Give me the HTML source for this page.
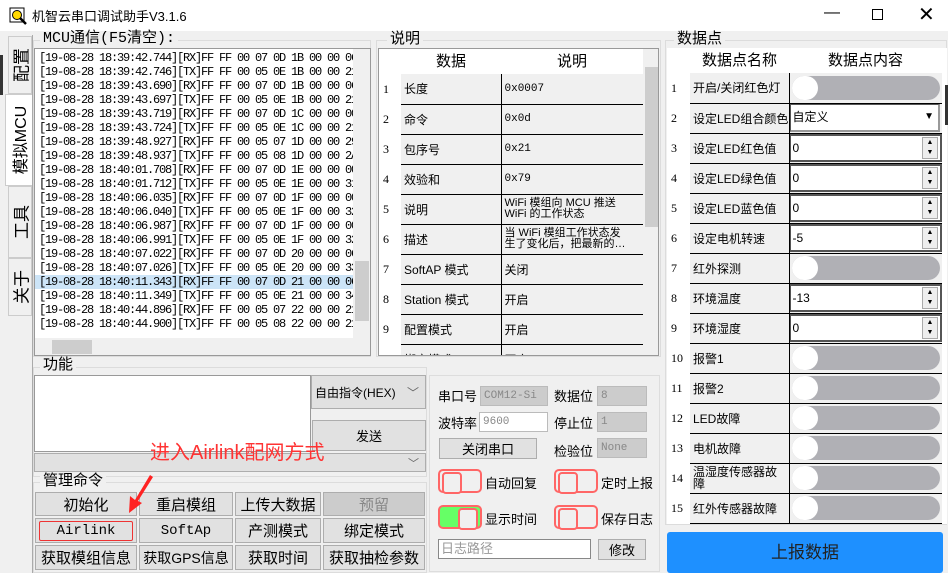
<!DOCTYPE html>
<html><head><meta charset="utf-8"><style>
*{box-sizing:border-box;margin:0;padding:0}
body{width:948px;height:573px;background:#f0f0f0;font-family:"Liberation Sans","Noto Sans CJK SC",sans-serif;font-size:13px;color:#000;position:relative;overflow:hidden}
.a{position:absolute}
.grp{position:absolute;border:1px solid #dcdcdc}
.gt{position:absolute;background:#f0f0f0;padding:0 3px;font-size:15px;line-height:16px}
.log{font-family:"Liberation Mono","Noto Sans CJK SC",monospace;font-size:12px;letter-spacing:-1.2px;line-height:14px;white-space:nowrap}
.btn{position:absolute;background:#e1e1e1;border:1px solid #adadad;text-align:center;font-size:15px;display:flex;align-items:center;justify-content:center;white-space:nowrap;overflow:hidden}
table{border-collapse:collapse;position:absolute;table-layout:fixed}
td{height:30px;border-bottom:1px solid #000;font-size:12px;padding-left:3px;overflow:hidden;white-space:nowrap}
td.n{border:none;background:#fff;padding-left:4px;font-family:"Liberation Serif",serif}
td.k{background:#f0f0f0;border-right:1px solid #000}
td.v{background:#f0f0f0}
.sw{height:24px;margin:0 2px;background:#b0b0b5;border-radius:12px;position:relative}
.sw:before{content:"";position:absolute;left:0;top:0;width:26px;height:24px;border-radius:12px;background:#fff}
.sp{height:28px;background:#fff;border:2px solid #555;border-left:1px solid #555;position:relative;padding-left:2px;line-height:24px;font-size:12px}
.sp i{position:absolute;right:2px;top:1px;width:16px;height:22px;border:1px solid #aaa;background:#eee;font-style:normal;font-size:7px;line-height:10px;text-align:center}
.tg{position:absolute;width:44px;height:24px;border:2px solid #f66;border-radius:5px;background:#f0f0f0}
.tg:before{content:"";position:absolute;left:2px;top:1px;width:16px;height:18px;border:2px solid #f66;border-radius:4px;background:#f0f0f0}
.tg.on:before{left:auto;right:2px}
.lb{position:absolute;font-size:13px}
.cb{position:absolute;background:#ccc;border:1px solid #bbb;font-size:11px;color:#888;padding-left:3px;line-height:18px;font-family:"Liberation Mono",monospace}
.tab{position:absolute;border:1px solid #ccc;overflow:hidden}
.tab span{position:absolute;left:50%;top:50%;transform:translate(-50%,-50%) rotate(-90deg);white-space:nowrap;font-size:17px}
</style></head><body>
<div class="a" style="left:0;top:0;width:948px;height:31px;background:#fff"></div>
<svg class="a" style="left:9px;top:7px" width="18" height="18"><rect x="1" y="1" width="14" height="14" fill="#fff" stroke="#000"/><circle cx="8" cy="8" r="4.5" fill="#ffd800" stroke="#000"/><line x1="11" y1="11" x2="17" y2="17" stroke="#000" stroke-width="2.5"/></svg>
<div class="a" style="left:32px;top:6px;font-size:13px">机智云串口调试助手V3.1.6</div>
<div class="a" style="left:824px;top:4px;font-size:16px">—</div>
<div class="a" style="left:872px;top:9px;width:11px;height:11px;border:1px solid #000"></div>
<div class="a" style="left:918px;top:2px;font-size:20px;font-weight:300">✕</div>
<div class="a" style="left:0;top:55px;width:3px;height:40px;background:#333"></div>
<div class="tab" style="left:8px;top:36px;width:24px;height:58px"><span>配置</span></div>
<div class="tab" style="left:5px;top:94px;width:28px;height:92px;background:#fff"><span style="font-size:16px">模拟MCU</span></div>
<div class="tab" style="left:8px;top:186px;width:24px;height:72px"><span>工具</span></div>
<div class="tab" style="left:8px;top:258px;width:24px;height:58px"><span>关于</span></div>
<div class="a" style="left:32px;top:35px;width:1px;height:538px;background:#aaa"></div>
<div class="grp" style="left:33px;top:40px;width:338px;height:317px"></div>
<div class="gt" style="left:40px;top:31px;font-family:'Liberation Mono','Noto Sans CJK SC',monospace">MCU通信(F5清空):</div>
<div class="a" style="left:34px;top:48px;width:337px;height:308px;background:#fff;border:1px solid #999;overflow:hidden">
<div class="log a" style="left:4px;top:2px">
[19-08-28 18:39:42.744][RX]FF FF 00 07 0D 1B 00 00 06<br>[19-08-28 18:39:42.746][TX]FF FF 00 05 0E 1B 00 00 21<br>[19-08-28 18:39:43.690][RX]FF FF 00 07 0D 1B 00 00 06<br>[19-08-28 18:39:43.697][TX]FF FF 00 05 0E 1B 00 00 21<br>[19-08-28 18:39:43.719][RX]FF FF 00 07 0D 1C 00 00 00<br>[19-08-28 18:39:43.724][TX]FF FF 00 05 0E 1C 00 00 21<br>[19-08-28 18:39:48.927][RX]FF FF 00 05 07 1D 00 00 29<br>[19-08-28 18:39:48.937][TX]FF FF 00 05 08 1D 00 00 2A<br>[19-08-28 18:40:01.708][RX]FF FF 00 07 0D 1E 00 00 00<br>[19-08-28 18:40:01.712][TX]FF FF 00 05 0E 1E 00 00 31<br>[19-08-28 18:40:06.035][RX]FF FF 00 07 0D 1F 00 00 00<br>[19-08-28 18:40:06.040][TX]FF FF 00 05 0E 1F 00 00 32<br>[19-08-28 18:40:06.987][RX]FF FF 00 07 0D 1F 00 00 00<br>[19-08-28 18:40:06.991][TX]FF FF 00 05 0E 1F 00 00 32<br>[19-08-28 18:40:07.022][RX]FF FF 00 07 0D 20 00 00 06<br>[19-08-28 18:40:07.026][TX]FF FF 00 05 0E 20 00 00 33<br><span style="background:#cce4f7;display:inline-block;width:330px;margin-left:-4px;padding-left:4px">[19-08-28 18:40:11.343][RX]FF FF 00 07 0D 21 00 00 06</span><br>[19-08-28 18:40:11.349][TX]FF FF 00 05 0E 21 00 00 34<br>[19-08-28 18:40:44.896][RX]FF FF 00 05 07 22 00 00 21<br>[19-08-28 18:40:44.900][TX]FF FF 00 05 08 22 00 00 21
</div>
<div class="a" style="left:318px;top:0;width:18px;height:290px;background:#f0f0f0"></div>
<div class="a" style="left:320px;top:212px;width:14px;height:60px;background:#cdcdcd"></div>
<div class="a" style="left:0;top:289px;width:336px;height:18px;background:#f0f0f0"></div>
<div class="a" style="left:17px;top:291px;width:40px;height:14px;background:#cdcdcd"></div>
</div>
<div class="grp" style="left:376px;top:40px;width:285px;height:317px"></div>
<div class="gt" style="left:387px;top:31px">说明</div>
<div class="a" style="left:378px;top:48px;width:281px;height:308px;background:#fff;border:1px solid #999;overflow:hidden">
<div class="a" style="left:22px;top:0;width:242px;height:25px;text-align:center;font-size:15px;line-height:25px"><span style="position:absolute;left:0;width:100px">数据</span><span style="position:absolute;left:100px;width:142px">说明</span></div>
<table style="left:0;top:25px;width:264px">
<colgroup><col style="width:22px"><col style="width:100px"><col style="width:142px"></colgroup>
<tr><td class="n">1</td><td class="k">长度</td><td class="v" style="font-family:'Liberation Mono',monospace;font-size:11px">0x0007</td></tr>
<tr><td class="n">2</td><td class="k">命令</td><td class="v" style="font-family:'Liberation Mono',monospace;font-size:11px">0x0d</td></tr>
<tr><td class="n">3</td><td class="k">包序号</td><td class="v" style="font-family:'Liberation Mono',monospace;font-size:11px">0x21</td></tr>
<tr><td class="n">4</td><td class="k">效验和</td><td class="v" style="font-family:'Liberation Mono',monospace;font-size:11px">0x79</td></tr>
<tr><td class="n">5</td><td class="k">说明</td><td class="v" style="font-size:11px;line-height:11px">WiFi 模组向 MCU 推送<br>WiFi 的工作状态</td></tr>
<tr><td class="n">6</td><td class="k">描述</td><td class="v" style="font-size:11px;line-height:11px">当 WiFi 模组工作状态发<br>生了变化后，把最新的…</td></tr>
<tr><td class="n">7</td><td class="k">SoftAP 模式</td><td class="v">关闭</td></tr>
<tr><td class="n">8</td><td class="k">Station 模式</td><td class="v">开启</td></tr>
<tr><td class="n">9</td><td class="k">配置模式</td><td class="v">开启</td></tr>
<tr><td class="n">10</td><td class="k">绑定模式</td><td class="v">开启</td></tr>
</table>
<div class="a" style="left:264px;top:0;width:16px;height:308px;background:#f0f0f0"></div>
<div class="a" style="left:266px;top:18px;width:13px;height:160px;background:#cdcdcd"></div>
</div>
<div class="grp" style="left:665px;top:40px;width:282px;height:485px"></div>
<div class="gt" style="left:674px;top:31px">数据点</div>
<div class="a" style="left:667px;top:48px;width:280px;height:476px;background:#fff;overflow:hidden">
<div class="a" style="left:23px;top:0;width:252px;height:25px;font-size:15px;line-height:25px;text-align:center"><span style="position:absolute;left:0;width:99px">数据点名称</span><span style="position:absolute;left:99px;width:153px">数据点内容</span></div>
<table style="left:0;top:25px;width:275px">
<colgroup><col style="width:23px"><col style="width:99px"><col style="width:153px"></colgroup>
<tr><td class="n">1</td><td class="k">开启/关闭红色灯</td><td class="v" style="padding:0"><div class="sw"></div></td></tr>
<tr><td class="n">2</td><td class="k">设定LED组合颜色</td><td class="v" style="padding:0"><div class="sp" style="border:1px solid #555;border-right:2px solid #999;border-bottom:2px solid #999;margin-right:2px">自定义<span style="position:absolute;right:4px;top:0;font-size:10px">▼</span></div></td></tr>
<tr><td class="n">3</td><td class="k">设定LED红色值</td><td class="v" style="padding:0"><div class="sp">0<i>▲<br>▼</i></div></td></tr>
<tr><td class="n">4</td><td class="k">设定LED绿色值</td><td class="v" style="padding:0"><div class="sp">0<i>▲<br>▼</i></div></td></tr>
<tr><td class="n">5</td><td class="k">设定LED蓝色值</td><td class="v" style="padding:0"><div class="sp">0<i>▲<br>▼</i></div></td></tr>
<tr><td class="n">6</td><td class="k">设定电机转速</td><td class="v" style="padding:0"><div class="sp">-5<i>▲<br>▼</i></div></td></tr>
<tr><td class="n">7</td><td class="k">红外探测</td><td class="v" style="padding:0"><div class="sw"></div></td></tr>
<tr><td class="n">8</td><td class="k">环境温度</td><td class="v" style="padding:0"><div class="sp">-13<i>▲<br>▼</i></div></td></tr>
<tr><td class="n">9</td><td class="k">环境湿度</td><td class="v" style="padding:0"><div class="sp">0<i>▲<br>▼</i></div></td></tr>
<tr><td class="n">10</td><td class="k">报警1</td><td class="v" style="padding:0"><div class="sw"></div></td></tr>
<tr><td class="n">11</td><td class="k">报警2</td><td class="v" style="padding:0"><div class="sw"></div></td></tr>
<tr><td class="n">12</td><td class="k">LED故障</td><td class="v" style="padding:0"><div class="sw"></div></td></tr>
<tr><td class="n">13</td><td class="k">电机故障</td><td class="v" style="padding:0"><div class="sw"></div></td></tr>
<tr><td class="n">14</td><td class="k" style="line-height:12px;white-space:normal">温湿度传感器故障</td><td class="v" style="padding:0"><div class="sw"></div></td></tr>
<tr><td class="n">15</td><td class="k">红外传感器故障</td><td class="v" style="padding:0"><div class="sw"></div></td></tr>
</table>
</div>
<div class="a" style="left:667px;top:532px;width:276px;height:41px;background:#1e90ff;border-radius:3px;color:#222;font-size:17px;text-align:center;line-height:41px">上报数据</div>
<div class="grp" style="left:33px;top:367px;width:394px;height:110px"></div>
<div class="gt" style="left:40px;top:357px">功能</div>
<div class="a" style="left:34px;top:375px;width:277px;height:77px;background:#fff;border:1px solid #999"></div>
<div class="btn" style="left:311px;top:375px;width:115px;height:34px;font-size:12px;justify-content:flex-start;padding-left:3px">自由指令(HEX)<span style="position:absolute;right:6px;color:#666">﹀</span></div>
<div class="btn" style="left:312px;top:420px;width:114px;height:31px;font-size:13px">发送</div>
<div class="btn" style="left:34px;top:453px;width:392px;height:19px"><span style="position:absolute;right:6px;font-size:11px;color:#666">﹀</span></div>
<div class="grp" style="left:33px;top:482px;width:394px;height:91px"></div>
<div class="gt" style="left:40px;top:473px">管理命令</div>
<div class="btn" style="left:35px;top:492px;width:102px;height:24px">初始化</div>
<div class="btn" style="left:139px;top:492px;width:94px;height:24px">重启模组</div>
<div class="btn" style="left:235px;top:492px;width:86px;height:24px">上传大数据</div>
<div class="btn" style="left:323px;top:492px;width:102px;height:24px;background:#ccc;color:#888">预留</div>
<div class="btn" style="left:35px;top:518px;width:102px;height:25px"><div style="border:1px solid #e33;border-radius:2px;width:94px;height:20px;font-family:'Liberation Mono',monospace;font-size:14px;line-height:18px">Airlink</div></div>
<div class="btn" style="left:139px;top:518px;width:94px;height:25px;font-family:'Liberation Mono',monospace;font-size:14px">SoftAp</div>
<div class="btn" style="left:235px;top:518px;width:86px;height:25px">产测模式</div>
<div class="btn" style="left:323px;top:518px;width:102px;height:25px">绑定模式</div>
<div class="btn" style="left:35px;top:545px;width:102px;height:25px">获取模组信息</div>
<div class="btn" style="left:139px;top:545px;width:94px;height:25px;font-size:14px">获取GPS信息</div>
<div class="btn" style="left:235px;top:545px;width:86px;height:25px">获取时间</div>
<div class="btn" style="left:323px;top:545px;width:102px;height:25px">获取抽检参数</div>
<div class="a" style="left:150px;top:440px;color:#f33;font-size:20px;line-height:26px">进入Airlink配网方式</div>
<svg class="a" style="left:120px;top:470px" width="40" height="50"><polygon points="30,5 15,30 10,26 9,43 22,33 18,31 33,7" fill="#f22"/></svg>
<div class="grp" style="left:429px;top:375px;width:231px;height:197px;border-color:#ddd"></div>
<div class="lb" style="left:438px;top:386px">串口号</div>
<div class="cb" style="left:480px;top:386px;width:68px;height:20px">COM12-Si</div>
<div class="lb" style="left:554px;top:386px">数据位</div>
<div class="cb" style="left:597px;top:386px;width:50px;height:20px">8</div>
<div class="lb" style="left:438px;top:413px">波特率</div>
<div class="cb" style="left:479px;top:412px;width:69px;height:20px;background:#fff;border-color:#bbb">9600</div>
<div class="lb" style="left:554px;top:413px">停止位</div>
<div class="cb" style="left:597px;top:412px;width:50px;height:20px">1</div>
<div class="btn" style="left:439px;top:438px;width:98px;height:21px;font-size:13px">关闭串口</div>
<div class="lb" style="left:554px;top:441px">检验位</div>
<div class="cb" style="left:597px;top:438px;width:50px;height:20px">None</div>
<div class="tg" style="left:438px;top:469px"></div><div class="lb" style="left:485px;top:473px">自动回复</div>
<div class="tg" style="left:554px;top:469px"></div><div class="lb" style="left:601px;top:473px">定时上报</div>
<div class="tg on" style="left:438px;top:505px;background:#6f6"></div><div class="lb" style="left:485px;top:509px">显示时间</div>
<div class="tg" style="left:554px;top:505px"></div><div class="lb" style="left:601px;top:509px">保存日志</div>
<div class="a" style="left:438px;top:539px;width:153px;height:20px;background:#fff;border:1px solid #888;color:#999;font-size:13px;padding-left:2px;line-height:18px">日志路径</div>
<div class="btn" style="left:598px;top:539px;width:48px;height:21px;font-size:13px">修改</div>
<div class="a" style="left:945px;top:85px;width:3px;height:40px;background:#333"></div>
</body></html>
